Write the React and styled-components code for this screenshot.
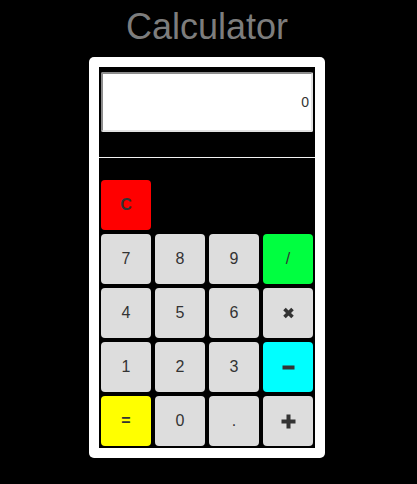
import React, { useState } from 'react'
import styled, { createGlobalStyle } from 'styled-components'

const GlobalStyle = createGlobalStyle`
body {
  margin: 0;
  background: #000;
  font-family: "Liberation Sans", Arial, sans-serif;
}
`

const Page = styled.div`
  width: 414px;
  padding-top: 6px;
`

const Title = styled.h1`
  margin: 0 0 10px;
  font-size: 36px;
  font-weight: normal;
  color: #7d7d7d;
  text-align: center;
  line-height: 41px;
`

const Card = styled.div`
  width: 216px;
  margin: 0 auto;
  padding: 10px;
  background: #fff;
  border-radius: 5px;
`

const Body = styled.div`
  background: #000;
  padding-top: 5px;
`

const DisplayRow = styled.div`
  padding: 0 2px;
`

const Display = styled.input`
  box-sizing: border-box;
  display: block;
  width: 212px;
  height: 60px;
  margin: 0;
  padding: 1px 2px;
  border: 2px solid;
  border-color: #8c8c8c #e2e2e2 #e2e2e2 #8c8c8c;
  border-radius: 2px;
  background: #fff;
  text-align: right;
  font-family: "Liberation Sans", Arial, sans-serif;
  font-size: 14px;
  color: #333;
  outline: none;
`

const Divider = styled.div`
  margin-top: 25px;
  height: 1px;
  background: #f2f2f2;
`

const Keys = styled.div`
  display: grid;
  grid-template-columns: repeat(4, 54px);
  grid-auto-rows: 54px;
  margin-top: 20px;
`

const Key = styled.button`
  margin: 2px;
  width: 50px;
  height: 50px;
  border: none;
  border-radius: 4px;
  padding: 0;
  display: flex;
  align-items: center;
  justify-content: center;
  background: ${p => p.$bg || '#dddddd'};
  color: #333;
  font-family: "Liberation Sans", Arial, sans-serif;
  font-size: 16px;
  font-weight: ${p => (p.$bold ? 'bold' : 'normal')};
  cursor: pointer;
  grid-column: ${p => p.$col || 'auto'};
`

const Times = () => (
  <svg width="13" height="12" viewBox="0 0 13 12">
    <path d="M2.5 2 L10.5 10 M10.5 2 L2.5 10" stroke="#333" strokeWidth="3.6" />
  </svg>
)

const Minus = () => (
  <svg width="13" height="5" viewBox="0 0 13 5">
    <rect x="0.5" y="0.5" width="12" height="4" fill="#333" />
  </svg>
)

const Plus = () => (
  <svg width="15" height="15" viewBox="0 0 15 15">
    <rect x="0.5" y="5.5" width="14" height="4" fill="#333" />
    <rect x="5.5" y="0.5" width="4" height="14" fill="#333" />
  </svg>
)

const App = () => {
  const [value] = useState('0')
  return (
    <Page>
      <GlobalStyle />
      <Title>Calculator</Title>
      <Card>
        <Body>
          <DisplayRow>
            <Display value={value} readOnly />
          </DisplayRow>
          <Divider />
          <Keys>
            <Key $bg="#ff0000" $bold $col="1 / 2">C</Key>
            <Key $col="1">7</Key>
            <Key>8</Key>
            <Key>9</Key>
            <Key $bg="#00ff40">/</Key>
            <Key>4</Key>
            <Key>5</Key>
            <Key>6</Key>
            <Key><Times /></Key>
            <Key>1</Key>
            <Key>2</Key>
            <Key>3</Key>
            <Key $bg="#00ffff"><Minus /></Key>
            <Key $bg="#ffff00" $bold>=</Key>
            <Key>0</Key>
            <Key>.</Key>
            <Key><Plus /></Key>
          </Keys>
        </Body>
      </Card>
    </Page>
  )
}

export default App
